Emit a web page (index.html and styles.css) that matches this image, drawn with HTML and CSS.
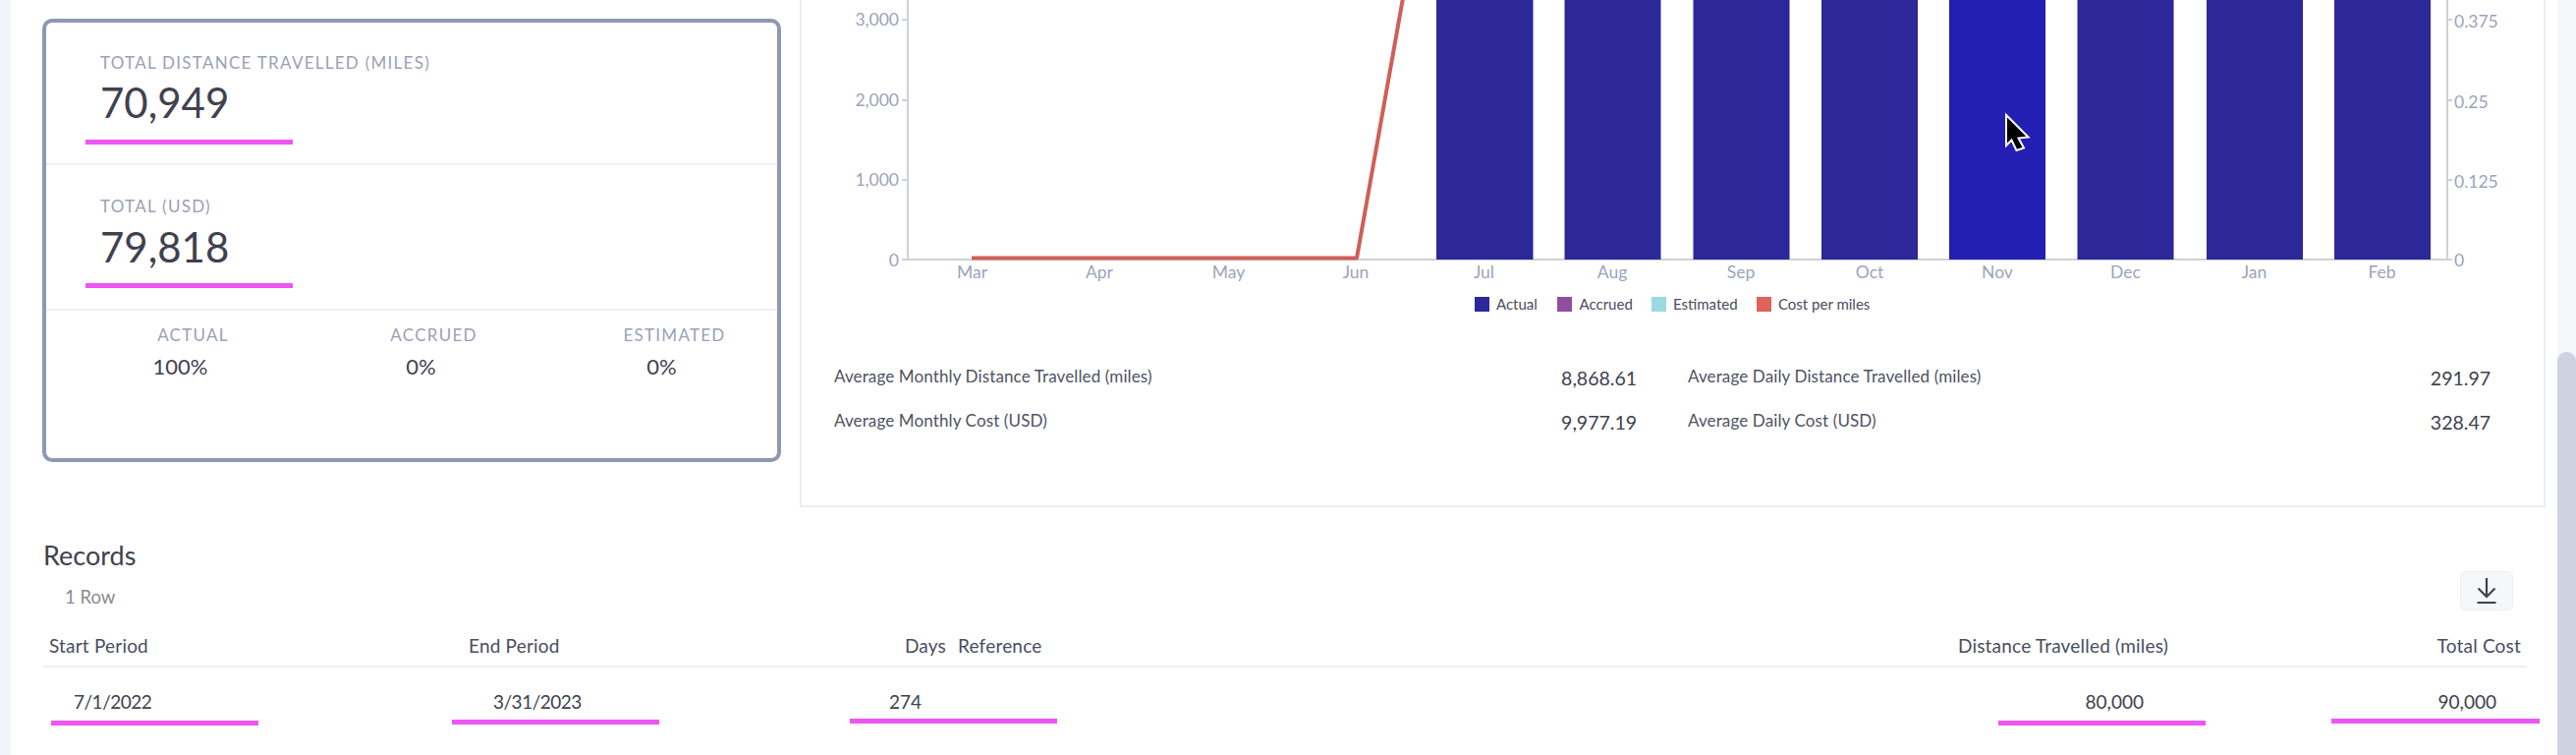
FILE: index.html
```html
<!DOCTYPE html>
<html lang="en">
<head>
<meta charset="utf-8">
<title>Records</title>
<link rel="stylesheet" href="styles.css">
</head>
<body>
<div class="app">
  <div class="gutter"></div>
  <main class="main">
    <section class="top">
      <aside class="card">
        <div class="metric metric-first">
          <div class="label">TOTAL DISTANCE TRAVELLED (MILES)</div>
          <div class="number">70,949</div>
          <div class="mark"></div>
        </div>
        <div class="metric metric-second">
          <div class="label">TOTAL (USD)</div>
          <div class="number">79,818</div>
          <div class="mark"></div>
        </div>
        <div class="split">
          <div class="split-col"><div class="label">ACTUAL</div><div class="pct">100%</div></div>
          <div class="split-col"><div class="label">ACCRUED</div><div class="pct">0%</div></div>
          <div class="split-col"><div class="label">ESTIMATED</div><div class="pct">0%</div></div>
        </div>
      </aside>
      <div class="panel">
        <svg class="chart" viewBox="816 0 1773 330" width="1773" height="330" aria-label="Distance and cost per month">
          <g class="grid-lines">
            <path d="M924 0V264M2491 0V264M923 264H2491"/>
            <path d="M918 20H924M918 102H924M918 183H924M918 264H924M2491 20H2496M2491 102H2496M2491 183H2496M2491 264H2496"/>
          </g>
          <g class="bars">
            <rect x="1462" y="0" width="98.500" height="264"/>
            <rect x="1592.500" y="0" width="98" height="264"/>
            <rect x="1723.500" y="0" width="98" height="264"/>
            <rect x="1854" y="0" width="98" height="264"/>
            <rect class="bar-hover" x="1984" y="0" width="98" height="264"/>
            <rect x="2114.500" y="0" width="98" height="264"/>
            <rect x="2246" y="0" width="98" height="264"/>
            <rect x="2376" y="0" width="98" height="264"/>
          </g>
          <polyline class="line" points="989,262.500 1381,262.500 1428,-2"/>
          <g class="axis-left">
            <text x="915" y="26">3,000</text>
            <text x="915" y="108">2,000</text>
            <text x="915" y="189">1,000</text>
            <text x="915" y="271">0</text>
          </g>
          <g class="axis-right">
            <text x="2498" y="28">0.375</text>
            <text x="2498" y="110">0.25</text>
            <text x="2498" y="191">0.125</text>
            <text x="2498" y="271">0</text>
          </g>
          <g class="axis-x">
            <text x="989.500" y="283">Mar</text>
            <text x="1119" y="283">Apr</text>
            <text x="1250.500" y="283">May</text>
            <text x="1380" y="283">Jun</text>
            <text x="1510.500" y="283">Jul</text>
            <text x="1641" y="283">Aug</text>
            <text x="1772" y="283">Sep</text>
            <text x="1903" y="283">Oct</text>
            <text x="2033" y="283">Nov</text>
            <text x="2163.500" y="283">Dec</text>
            <text x="2294.500" y="283">Jan</text>
            <text x="2424.500" y="283">Feb</text>
          </g>
          <g class="legend">
            <rect class="sw-actual" x="1501" y="302" width="15" height="15"/>
            <text x="1523" y="315">Actual</text>
            <rect class="sw-accrued" x="1585" y="302" width="15" height="15"/>
            <text x="1607.500" y="315">Accrued</text>
            <rect class="sw-estimated" x="1681" y="302" width="15" height="15"/>
            <text x="1703" y="315">Estimated</text>
            <rect class="sw-cost" x="1788" y="302" width="15" height="15"/>
            <text x="1810" y="315">Cost per miles</text>
          </g>
          <path class="cursor" d="M2042 117L2064.500 139.500L2054.500 140.500L2060 150.500L2052.500 153L2047.500 142.500L2042 148Z"/>
        </svg>
        <div class="stats">
          <div class="stat"><span class="stat-name">Average Monthly Distance Travelled (miles)</span><span class="stat-value">8,868.61</span></div>
          <div class="stat"><span class="stat-name">Average Daily Distance Travelled (miles)</span><span class="stat-value">291.97</span></div>
          <div class="stat"><span class="stat-name">Average Monthly Cost (USD)</span><span class="stat-value">9,977.19</span></div>
          <div class="stat"><span class="stat-name">Average Daily Cost (USD)</span><span class="stat-value">328.47</span></div>
        </div>
      </div>
    </section>
    <section class="records">
      <h2 class="records-title">Records</h2>
      <div class="toolbar">
        <span class="row-count">1 Row</span>
        <button class="download" type="button" aria-label="Download">
          <svg width="24" height="30" viewBox="0 0 24 30" aria-hidden="true"><path d="M12 2V21M3.500 12.500L12 21L20.500 12.500M2.500 27H21.500"/></svg>
        </button>
      </div>
      <div class="table">
        <div class="head">Start Period</div>
        <div class="head">End Period</div>
        <div class="head head-end">Days</div>
        <div class="head">Reference</div>
        <div class="head head-end">Distance Travelled (miles)</div>
        <div class="head head-end">Total Cost</div>
        <div class="cell cell-date">7/1/2022</div>
        <div class="cell cell-date">3/31/2023</div>
        <div class="cell cell-end">274</div>
        <div class="cell"></div>
        <div class="cell cell-end">80,000</div>
        <div class="cell cell-end">90,000</div>
        <div class="stroke stroke-a"></div>
        <div class="stroke stroke-b"></div>
        <div class="stroke stroke-c"></div>
        <div class="stroke stroke-d"></div>
        <div class="stroke stroke-e"></div>
      </div>
    </section>
  </main>
  <div class="scrollbar"><div class="thumb"></div></div>
</div>
</body>
</html>
```
FILE: styles.css
```css
* { box-sizing: border-box; }
html, body { margin: 0; height: 768px; overflow: hidden; background: #fff; }
body { font-family: Lato, "Noto Sans", sans-serif; color: #40414f; }

.app { display: flex; width: 2622px; height: 768px; }
.gutter { width: 11px; flex: none; background: #f3f4f8; }
.main { flex: 1; min-width: 0; }
.scrollbar { width: 19px; flex: none; background: #f6f7fb; padding-top: 358px; }
.thumb { height: 410px; background: #cdd3e0; border-radius: 9px 9px 0 0; }

.top { display: flex; height: 516px; padding-left: 32px; }
.card {
  width: 752px; height: 451px; margin-top: 19px; flex: none;
  border: 4px solid #8f98b0; border-radius: 10px; background: #fff;
}
.metric { border-bottom: 2px solid #f0f1f5; }
.metric-first { padding: 31px 0 19px; }
.metric-second { padding: 32px 0 21px; }
.metric-second .mark { margin-top: 15px; }
.label { font-size: 17px; line-height: 20px; letter-spacing: 1.27px; color: #9aa1b6; padding-left: 55px; }
.number { font-size: 42px; line-height: 44px; color: #40414f; padding-left: 55px; margin-top: 8px; }
.mark { width: 211px; height: 5px; margin: 16px 0 0 40px; background: #ee55f5; }
.metric-second .number { margin-top: 9px; }
.split { display: grid; grid-template-columns: repeat(3, 245px); padding: 15px 0 0 27px; }
.split .label { padding: 0; text-align: center; }
.pct { font-size: 22px; line-height: 28px; margin-top: 8px; padding-right: 26px; text-align: center; color: #40414f; }

.panel {
  width: 1777px; height: 516px; margin-left: 19px; flex: none;
  border: 2px solid #ecedf3; border-top: 0; background: #fff;
}
.chart { display: block; }
.grid-lines path { fill: none; stroke: #cfd1d8; stroke-width: 2; }
.bars rect { fill: #2c2899; }
.bars .bar-hover { fill: #231fb3; }
.line { fill: none; stroke: #cf5f58; stroke-width: 4; stroke-linejoin: round; }
.axis-left text, .axis-right text, .axis-x text { font-size: 17.500px; fill: #9ca3bb; }
.axis-left text { text-anchor: end; }
.axis-x text { text-anchor: middle; }
.legend text { font-size: 15px; fill: #4a4d5e; }
.sw-actual { fill: #2c2899; }
.sw-accrued { fill: #8f4f9f; }
.sw-estimated { fill: #9adade; }
.sw-cost { fill: #e0635a; }
.cursor { fill: #000; stroke: #fff; stroke-width: 2; }

.stats {
  display: grid; grid-template-columns: 817px 817px; column-gap: 52px;
  grid-auto-rows: 45px; padding: 42px 0 0 33px;
}
.stat { display: flex; justify-content: space-between; align-items: center; height: 24px; }
.stat-name { font-size: 17px; letter-spacing: .12px; color: #4f5263; position: relative; top: -2px; }
.stat-value { font-size: 19.500px; color: #40414f; }

.records { padding: 32px 31px 0 33px; }
.records-title { margin: 0; font-size: 27px; line-height: 33px; font-weight: 400; color: #40414f; }
.toolbar { display: flex; justify-content: space-between; height: 40px; padding-right: 14px; }
.row-count { font-size: 18.500px; line-height: 22px; padding: 15px 0 0 22px; color: #8a8c92; }
.download {
  width: 54px; height: 40px; padding: 0; display: flex; align-items: center; justify-content: center;
  background: #f6f7fb; border: 1px solid #eceef4; border-radius: 6px;
}
.download path { fill: none; stroke: #40414f; stroke-width: 2.2; }

.table {
  position: relative; display: grid;
  grid-template-columns: 427px 329px 169px 531px 713px 359px;
}
.head {
  margin-top: 25px; padding: 0 6px 9px; font-size: 19px; letter-spacing: .2px; line-height: 22px; color: #4a4d5e;
  border-bottom: 2px solid #eeeff3;
}
.head-end, .cell-end { text-align: right; }
.cell { padding: 24px 31px 0; font-size: 19px; line-height: 22px; color: #40414f; }
.cell-date { letter-spacing: -.5px; }
.stroke { position: absolute; height: 5px; width: 211px; background: #ee55f5; }
.stroke-a { left: 8px; top: 112px; }
.stroke-b { left: 416px; top: 111px; }
.stroke-c { left: 821px; top: 110px; }
.stroke-d { left: 1990px; top: 112px; }
.stroke-e { left: 2329px; top: 110px; width: 212px; }
```
